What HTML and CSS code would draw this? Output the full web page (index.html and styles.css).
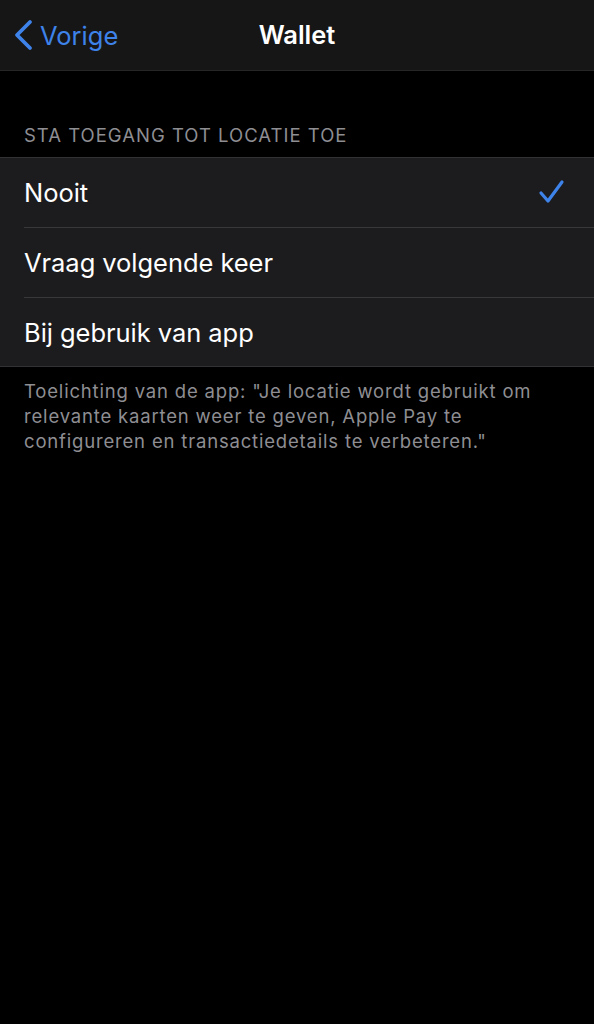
FILE: index.html
```html
<!DOCTYPE html>
<html lang="nl">
<head>
<meta charset="utf-8">
<link rel="stylesheet" href="styles.css">
</head>
<body>
<div class="screen">
  <header class="nav">
    <div class="back">
      <svg class="chev" viewBox="0 0 22 32" width="22" height="32"><path d="M18 3 L5 16 L18 29" fill="none" stroke="#3e83ea" stroke-width="3.8" stroke-linecap="round" stroke-linejoin="round"/></svg>
      <span class="back-label">Vorige</span>
    </div>
    <div class="title">Wallet</div>
  </header>
  <div class="section-head">STA TOEGANG TOT LOCATIE TOE</div>
  <ul class="list">
    <li class="row"><span class="label">Nooit</span>
      <svg class="check" viewBox="0 0 28 26" width="28" height="26"><path d="M3 14 L10 22 L24 3" fill="none" stroke="#3e83ea" stroke-width="3.2" stroke-linecap="round" stroke-linejoin="round"/></svg>
    </li>
    <li class="row"><span class="label">Vraag volgende keer</span></li>
    <li class="row"><span class="label">Bij gebruik van app</span></li>
  </ul>
  <p class="footer">Toelichting van de app: "Je locatie wordt gebruikt om relevante kaarten weer te geven, Apple Pay te configureren en transactiedetails te verbeteren."</p>
</div>
</body>
</html>
```
FILE: styles.css
```css
html, body {
  margin: 0;
  padding: 0;
  background: #000;
}
body {
  font-family: Inter, "Noto Sans", sans-serif;
  color: #fff;
}
.screen {
  width: 594px;
  min-height: 1024px;
  background: #000;
}
.nav {
  height: 71px;
  background: #161616;
  border-bottom: 1px solid #262628;
  box-sizing: border-box;
  display: flex;
  align-items: center;
  position: relative;
}
.back {
  display: flex;
  align-items: center;
  padding-left: 12px;
  gap: 6px;
}
.chev { display: block; }
.back-label {
  color: #3e83ea;
  font-size: 25.5px;
  letter-spacing: 0;
}
.title {
  position: absolute;
  left: 0;
  right: 0;
  top: 0;
  height: 70px;
  line-height: 70px;
  text-align: center;
  font-size: 25.5px;
  font-weight: 600;
  pointer-events: none;
}
.section-head {
  padding: 52px 24px 0;
  height: 34px;
  box-sizing: content-box;
  font-size: 18.5px;
  color: #8e8e93;
  letter-spacing: 1px;
  line-height: 24px;
}
.list {
  list-style: none;
  margin: 0;
  padding: 0;
  background: #1c1c1e;
  border-top: 1px solid #323234;
  border-bottom: 1px solid #323234;
}
.row {
  height: 69px;
  display: flex;
  align-items: center;
  justify-content: space-between;
  padding-right: 28px;
  margin-left: 24px;
  border-bottom: 1px solid #38383a;
}
.row:last-child { border-bottom: none; height: 68px; }
.label {
  font-size: 25.5px;
  letter-spacing: -0.05px;
}
.check { display: block; margin-top: -1px; }
.footer {
  margin: 0;
  padding: 12px 40px 0 24px;
  font-size: 18.5px;
  line-height: 25px;
  letter-spacing: 0.82px;
  color: #8e8e93;
}
```
